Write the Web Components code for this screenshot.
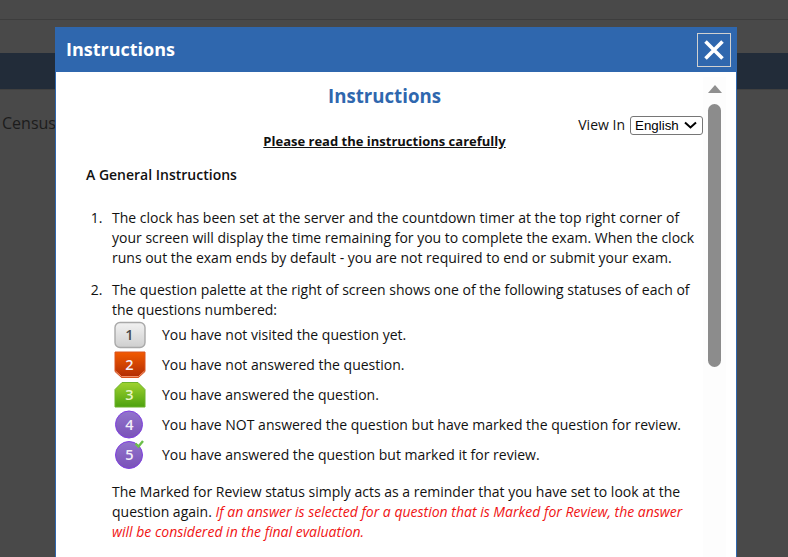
<!DOCTYPE html>
<html>
<head>
<meta charset="utf-8">
<title>Instructions</title>
<style>
  html, body { margin: 0; height: 100%; overflow: hidden; background: #494949; }
  body { font-family: "Open Sans", sans-serif; }
</style>
</head>
<body>
<exam-backdrop></exam-backdrop>
<instructions-modal heading="Instructions">
  <status-row slot="statuses" kind="visit" num="1">You have not visited the question yet.</status-row>
  <status-row slot="statuses" kind="not" num="2">You have not answered the question.</status-row>
  <status-row slot="statuses" kind="ans" num="3">You have answered the question.</status-row>
  <status-row slot="statuses" kind="mark" num="4">You have NOT answered the question but have marked the question for review.</status-row>
  <status-row slot="statuses" kind="markans" num="5">You have answered the question but marked it for review.</status-row>
</instructions-modal>

<script>
class ExamBackdrop extends HTMLElement {
  constructor() {
    super();
    this.attachShadow({ mode: "open" });
  }

  connectedCallback() {
    this.shadowRoot.innerHTML = `
      <style>
        :host { display: block; color: #1c1c1c; font: 16px "Open Sans", sans-serif; }
        .top { height: 19px; border-bottom: 1px solid #3d3d3d; }
        .sub { height: 33px; }
        .band { height: 36px; background: #222c39; border-bottom: 1px solid #404040; }
        .text { padding: 22px 0 0 2px; line-height: 22px; }
      </style>
      <div class="top"></div>
      <div class="sub"></div>
      <div class="band"></div>
      <div class="text">Census</div>
    `;
  }
}

class StatusRow extends HTMLElement {
  constructor() {
    super();
    this.attachShadow({ mode: "open" });
  }

  badge(kind) {
    const shapes = {
      visit: `<rect x="1" y="1.5" width="30" height="25" rx="5" fill="url(#g)" stroke="#a9a9a9" stroke-width="1.400"/>`,
      not: `<path d="M1 1H31V20.500L24.500 26.500H7.500L1 20.500Z" fill="url(#g)" stroke="#d9531f"/>
            <path d="M1.500 20L7.500 25.500H24.500L30.500 20" fill="none" stroke="#f29068"/>`,
      ans: `<path d="M8 1.500H24L31 8.500V26H1V8.500Z" fill="url(#g)" stroke="#6cb22a"/>`,
      mark: `<circle cx="15" cy="13.500" r="13.500" fill="url(#g)" stroke="#7f3fe0"/>`,
      markans: `<circle cx="15" cy="14" r="13.500" fill="url(#g)" stroke="#7f3fe0"/>
                <path d="M21.500 2.500L24.500 5.500L29 0" fill="none" stroke="#6cbf4a" stroke-width="2.400"/>`
    };
    const stops = {
      visit: ["#f2f2f2", "#cfcfcf"],
      not: ["#f25a00", "#b02c05"],
      ans: ["#9fd22f", "#4ea20f"],
      mark: ["#9274cc", "#7a52b8"],
      markans: ["#9274cc", "#7a52b8"]
    };
    const [a, b] = stops[kind];
    return `<svg viewBox="0 0 33 28" width="33" height="28" overflow="visible">
      <defs><linearGradient id="g" x1="0" y1="0" x2="0" y2="1">
        <stop offset="0" stop-color="${a}"/><stop offset="1" stop-color="${b}"/>
      </linearGradient></defs>
      ${shapes[kind]}
    </svg>`;
  }

  connectedCallback() {
    const kind = this.getAttribute("kind");
    this.shadowRoot.innerHTML = `
      <style>
        :host { display: flex; align-items: center; height: 30px; }
        .badge { position: relative; width: 33px; height: 28px; margin-right: 15px; flex: none; }
        .badge span {
          position: absolute; left: 0; right: 2px; top: 0; height: 28px; line-height: 28px;
          text-align: center; font-size: 14.500px; font-weight: 600;
          color: ${kind === "visit" ? "#4a4a4a" : kind === "ans" ? "#e8f5c8" : "#f3eef8"};
        }
      </style>
      <div class="badge">${this.badge(kind)}<span>${this.getAttribute("num")}</span></div>
      <div><slot></slot></div>
    `;
  }
}

class InstructionsModal extends HTMLElement {
  constructor() {
    super();
    this.attachShadow({ mode: "open" });
  }

  connectedCallback() {
    this.shadowRoot.innerHTML = `
      <style>
        :host {
          position: fixed; left: 55px; top: 27px; width: 682px; height: 530px;
          display: flex; flex-direction: column; box-sizing: border-box;
          background: #fff; border: solid #2f67ae; border-width: 0 1px;
          font: 14px/20px "Open Sans", sans-serif; color: #111;
        }
        header {
          height: 45px; flex: none; background: #2f67ae; color: #fff;
          display: flex; align-items: center; justify-content: space-between;
          padding: 0 6px 2px 11px; margin: 0 -1px; box-sizing: border-box;
          font-size: 18px; font-weight: 700;
        }
        .close {
          width: 32px; height: 32px; border: 1px solid #d0d0d0; display: flex;
          align-items: center; justify-content: center; margin-top: 3px;
        }
        .main { flex: 1; display: flex; min-height: 0; }
        .content { flex: 1; min-width: 0; overflow: hidden; padding: 0 0 0 30px; }
        h1 { margin: 13px 0 0; font-size: 18.670px; line-height: 22px; color: #2f67ae; text-align: center; font-weight: 700; padding-right: 20px; }
        .lang {
          display: flex; justify-content: flex-end; align-items: center; gap: 5px;
          height: 20px; margin-top: 8px;
        }
        .select {
          width: 73px; height: 19px; box-sizing: border-box; border: 1px solid #767676; border-radius: 3px;
          font: 13.333px/15px "Liberation Sans", Arial, sans-serif; color: #000;
          display: flex; align-items: center; justify-content: space-between; padding: 0 5px 0 4px;
        }
        .read { text-align: center; font-weight: 700; font-size: 13px; text-decoration: underline; line-height: 20px; margin-top: -4px; padding-right: 20px; }
        h2 { margin: 14px 0 0; font-size: 14px; font-weight: 600; line-height: 20px; }
        ol { margin: 23px 0 0; padding: 0 0 0 26px; }
        li { margin-bottom: 12px; }
        li::marker { content: counter(list-item) ".\\00a0\\00a0\\2009"; }
        .statuses { padding-left: 2px; margin-top: 0; margin-bottom: 12px; }
        em { color: #f01414; font-style: italic; }
        .bar { width: 23px; flex: none; margin: 5px 10px 0 0; background: #fdfdfd; display: flex; flex-direction: column; align-items: center; }
        .arrow { width: 0; height: 0; margin-top: 8px; border: solid transparent; border-width: 0 7.500px 8px; border-bottom-color: #8f8f8f; }
        .thumb { width: 13px; height: 263px; margin-top: 11px; background: #8c8c8c; border-radius: 7px; }
      </style>
      <header>
        <span>${this.getAttribute("heading")}</span>
        <div class="close">
          <svg width="22" height="22" viewBox="0 0 22 22"><path d="M2.500 2.500L19.500 19.500M19.500 2.500L2.500 19.500" stroke="#fff" stroke-width="3.600" fill="none"/></svg>
        </div>
      </header>
      <div class="main">
        <div class="content">
          <h1>${this.getAttribute("heading")}</h1>
          <div class="lang">
            <span>View In</span>
            <div class="select">English
              <svg width="13" height="8" viewBox="0 0 13 8"><path d="M1 1.500L6.500 6.500L12 1.500" stroke="#000" stroke-width="2" fill="none"/></svg>
            </div>
          </div>
          <div class="read">Please read the instructions carefully</div>
          <h2>A General Instructions</h2>
          <ol>
            <li>The clock has been set at the server and the countdown timer at the top right corner of your screen will display the time remaining for you to complete the exam. When the clock runs out the exam ends by default - you are not required to end or submit your exam.</li>
            <li>The question palette at the right of screen shows one of the following statuses of each of the questions numbered:
              <div class="statuses"><slot name="statuses"></slot></div>
              The Marked for Review status simply acts as a reminder that you have set to look at the question again. <em>If an answer is selected for a question that is Marked for Review, the answer will be considered in the final evaluation.</em>
            </li>
          </ol>
        </div>
        <div class="bar"><div class="arrow"></div><div class="thumb"></div></div>
      </div>
    `;
  }
}

customElements.define("exam-backdrop", ExamBackdrop);
customElements.define("status-row", StatusRow);
customElements.define("instructions-modal", InstructionsModal);
</script>
</body>
</html>
